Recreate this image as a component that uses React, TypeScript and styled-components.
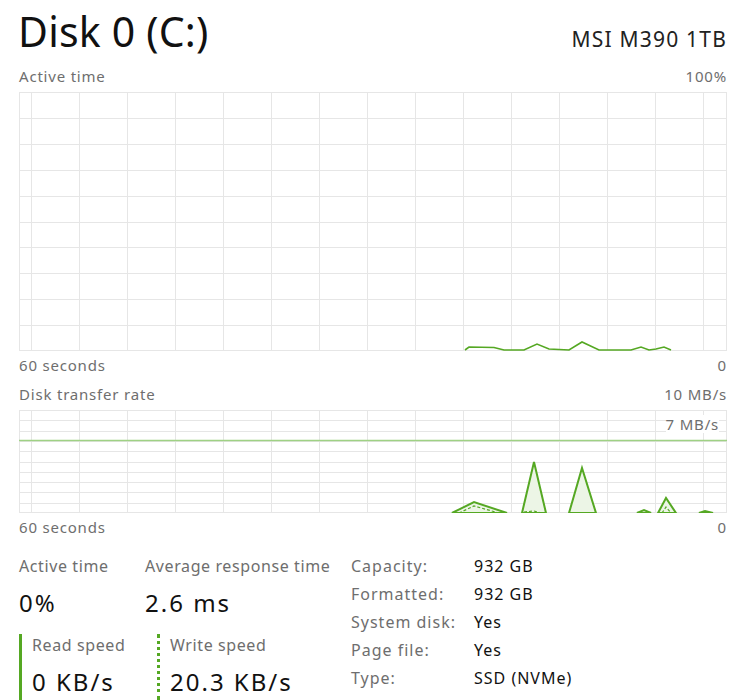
import React from "react";
import styled, { createGlobalStyle } from "styled-components";

const GREEN = "#55a823";
const GRID = "#e6e6e6";

const GlobalStyle = createGlobalStyle`
  html, body {
    margin: 0;
    padding: 0;
    background: #ffffff;
  }
  body {
    font-family: "Noto Sans", "Open Sans", "Liberation Sans", sans-serif;
    color: #1a1a1a;
  }
`;

const Page = styled.div`
  width: 739px;
  height: 700px;
  box-sizing: border-box;
  padding: 8px 12px 0 19px;
  overflow: hidden;
`;

const Header = styled.div`
  display: flex;
  justify-content: space-between;
  align-items: flex-end;
  height: 48px;
`;

const Title = styled.h1`
  margin: 0 0 0 -1px;
  font-size: 41px;
  font-weight: 400;
  line-height: 50px;
  letter-spacing: 0.2px;
  color: #111;
`;

const Model = styled.div`
  font-size: 21px;
  line-height: 28px;
  letter-spacing: 1.2px;
  color: #222;
  margin-bottom: 3px;
`;

const AxisRow = styled.div<{ $gap: number }>`
  display: flex;
  justify-content: space-between;
  font-size: 15px;
  line-height: 18px;
  letter-spacing: 0.8px;
  color: #6e6e6e;
  margin-top: ${(p) => p.$gap}px;
  height: 18px;
`;

const ChartBox = styled.div<{ $h: number }>`
  position: relative;
  height: ${(p) => p.$h}px;
  margin: 7px 0 5px;
`;

const ChartSvg = styled.svg`
  display: block;
  width: 100%;
  height: 100%;
`;

const InnerTag = styled.div`
  position: absolute;
  top: 5px;
  right: 8px;
  font-size: 15px;
  line-height: 18px;
  letter-spacing: 0.8px;
  color: #6e6e6e;
  background: #fff;
`;

const Stats = styled.div`
  display: flex;
  margin-top: 19px;
`;

const LeftStats = styled.div`
  display: grid;
  grid-template-columns: 126px 206px;
  grid-template-rows: 79px 66px;
`;

const Stat = styled.div<{ $marker?: "solid" | "dotted" }>`
  display: flex;
  flex-direction: column;
  padding-left: ${(p) => (p.$marker ? "10px" : "0")};
  border-left: ${(p) =>
    p.$marker === "solid"
      ? `3px solid ${GREEN}`
      : p.$marker === "dotted"
      ? `3px dotted ${GREEN}`
      : "none"};
  margin-left: ${(p) => (p.$marker === "dotted" ? "12px" : "0")};
`;

const StatLabel = styled.div`
  font-size: 16px;
  line-height: 22px;
  letter-spacing: 0.6px;
  color: #6e6e6e;
  white-space: nowrap;
`;

const StatValue = styled.div`
  margin-top: 10px;
  font-size: 24px;
  line-height: 32px;
  letter-spacing: 2px;
  color: #111;
  white-space: nowrap;
`;

const InfoTable = styled.div`
  display: grid;
  grid-template-columns: 123px auto;
  grid-auto-rows: 28px;
  margin-top: -3px;
  font-size: 16px;
  line-height: 28px;
  letter-spacing: 1px;
`;

const InfoKey = styled.div`
  color: #6e6e6e;
  white-space: nowrap;
`;

const InfoVal = styled.div`
  color: #111;
  white-space: nowrap;
`;

const W = 708;

function Grid({ h, rows }: { h: number; rows: number }) {
  const vlines: number[] = [];
  for (let x = 12.5; x < W; x += 48) vlines.push(x);
  const hlines: number[] = [];
  for (let i = 1; i < rows; i++) hlines.push(Math.round((h / rows) * i) + 0.5);
  return (
    <g>
      {vlines.map((x) => (
        <line key={"v" + x} x1={x} y1={0} x2={x} y2={h} stroke={GRID} strokeWidth={1} />
      ))}
      {hlines.map((y) => (
        <line key={"h" + y} x1={0} y1={y} x2={W} y2={y} stroke={GRID} strokeWidth={1} />
      ))}
      <rect x={0.5} y={0.5} width={W - 1} height={h - 1} fill="none" stroke={GRID} strokeWidth={1} />
    </g>
  );
}

// active time samples, chart px (x from left edge, y from top)
const activePts: [number, number][] = [
  [446, 258], [450, 255], [475, 255.5], [485, 258],
  [505, 258], [518, 252], [530, 257],
  [550, 258], [563, 250], [580, 258],
  [612, 258], [622, 255], [630, 258],
  [637, 257], [645, 255], [652, 258],
];

const transferShapes: [number, number][][] = [
  [[433, 103], [455, 92], [488, 103]],
  [[503, 103], [515, 52], [527, 103]],
  [[550, 103], [563, 58], [577, 103]],
  [[618, 103], [625, 100], [632, 103]],
  [[639, 103], [647, 88], [657, 103]],
  [[680, 103], [686, 101], [694, 103]],
];

const dashShapes: [number, number][][] = [
  [[440, 103], [455, 96], [480, 103]],
  [[505, 102], [515, 101], [522, 103]],
  [[643, 103], [647, 97], [652, 103]],
];

const toPts = (a: [number, number][]) => a.map((p) => p.join(",")).join(" ");

export default function App() {
  return (
    <>
      <GlobalStyle />
      <Page>
        <Header>
          <Title>Disk 0 (C:)</Title>
          <Model>MSI M390 1TB</Model>
        </Header>

        <AxisRow $gap={11}>
          <span>Active time</span>
          <span>100%</span>
        </AxisRow>
        <ChartBox $h={259}>
          <ChartSvg viewBox={`0 0 ${W} 259`} preserveAspectRatio="none">
            <Grid h={259} rows={10} />
            <polyline points={toPts(activePts)} fill="none" stroke={GREEN} strokeWidth={1.6} />
          </ChartSvg>
        </ChartBox>
        <AxisRow $gap={0}>
          <span>60 seconds</span>
          <span>0</span>
        </AxisRow>

        <AxisRow $gap={11}>
          <span>Disk transfer rate</span>
          <span>10 MB/s</span>
        </AxisRow>
        <ChartBox $h={103}>
          <ChartSvg viewBox={`0 0 ${W} 103`} preserveAspectRatio="none">
            <Grid h={103} rows={10} />
            <line x1={0} y1={30.5} x2={W} y2={30.5} stroke="#9fd184" strokeWidth={1.5} />
            {transferShapes.map((s, i) => (
              <polygon key={i} points={toPts(s)} fill="#ecf5e6" stroke={GREEN} strokeWidth={2} />
            ))}
            {dashShapes.map((s, i) => (
              <polyline key={"d" + i} points={toPts(s)} fill="none" stroke={GREEN} strokeWidth={1.2} strokeDasharray="3 2" />
            ))}
          </ChartSvg>
          <InnerTag>7 MB/s</InnerTag>
        </ChartBox>
        <AxisRow $gap={0}>
          <span>60 seconds</span>
          <span>0</span>
        </AxisRow>

        <Stats>
          <LeftStats>
            <Stat>
              <StatLabel>Active time</StatLabel>
              <StatValue>0%</StatValue>
            </Stat>
            <Stat>
              <StatLabel>Average response time</StatLabel>
              <StatValue>2.6 ms</StatValue>
            </Stat>
            <Stat $marker="solid">
              <StatLabel>Read speed</StatLabel>
              <StatValue>0 KB/s</StatValue>
            </Stat>
            <Stat $marker="dotted">
              <StatLabel>Write speed</StatLabel>
              <StatValue>20.3 KB/s</StatValue>
            </Stat>
          </LeftStats>
          <InfoTable>
            <InfoKey>Capacity:</InfoKey>
            <InfoVal>932 GB</InfoVal>
            <InfoKey>Formatted:</InfoKey>
            <InfoVal>932 GB</InfoVal>
            <InfoKey>System disk:</InfoKey>
            <InfoVal>Yes</InfoVal>
            <InfoKey>Page file:</InfoKey>
            <InfoVal>Yes</InfoVal>
            <InfoKey>Type:</InfoKey>
            <InfoVal>SSD (NVMe)</InfoVal>
          </InfoTable>
        </Stats>
      </Page>
    </>
  );
}
